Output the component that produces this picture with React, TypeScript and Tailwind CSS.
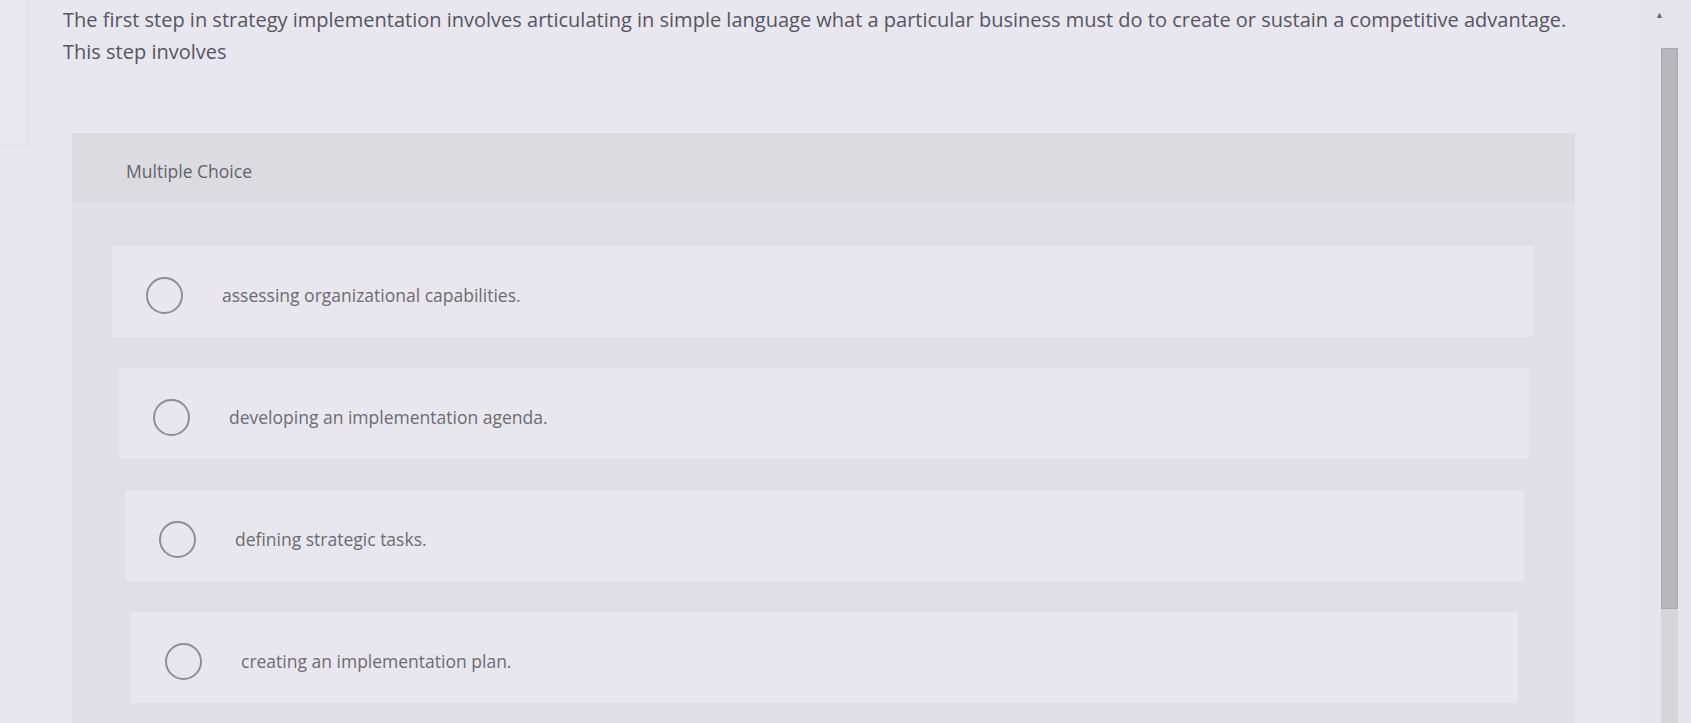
import React from "react";

const options = [
  { text: "assessing organizational capabilities.", box: "ml-[40px] mr-[42px]" },
  { text: "developing an implementation agenda.", box: "ml-[47px] mr-[46px]" },
  { text: "defining strategic tasks.", box: "ml-[53px] mr-[51px]" },
  { text: "creating an implementation plan.", box: "ml-[59px] mr-[57px]" },
];

export default function App() {
  return (
    <div
      className="w-[1691px] h-[723px] overflow-hidden bg-[#e8e6ef] flex"
      style={{ fontFamily: "'Open Sans', Lato, sans-serif" }}
    >
      <div className="relative flex-1 flex flex-col">
        <div className="absolute left-0 top-0 w-[29px] h-[146px] border-r border-b border-[#dedde4] bg-[#e9e7f0]" />
        <div className="pl-[63px] pt-[4px] text-[20px] leading-[32px] text-[#56555d]">
          <div className="whitespace-nowrap">
            The first step in strategy implementation involves articulating in simple language what a particular business must do to create or sustain a competitive advantage.
          </div>
          <div>This step involves</div>
        </div>
        <div className="mt-[65px] ml-[72px] w-[1503px] flex-1 bg-[#e0dfe5] flex flex-col">
          <div className="h-[69px] bg-[#dcdbe0] flex items-center pl-[54px] pt-[8px] text-[17.5px] text-[#64636b]">
            Multiple Choice
          </div>
          <div className="flex flex-col gap-[31px] pt-[44px]">
            {options.map((o, i) => (
              <div key={i} className={`${o.box} h-[91px] pt-[7px] bg-[#e8e7ed] flex items-center`}>
                <div className="ml-[34px] w-[37px] h-[37px] rounded-full border-2 border-[#8f8e97] shrink-0" />
                <div className="ml-[39px] text-[17.5px] text-[#6c6b73]">{o.text}</div>
              </div>
            ))}
          </div>
        </div>
      </div>
      <div className="w-[51px] flex flex-col bg-[#e6e5ec]">
        <div className="h-[48px] w-full flex items-start pt-[8px] pl-[15px] text-[9px] text-[#6a6a70]">▲</div>
        <div className="ml-[21px] w-[17px] flex-1 flex flex-col">
          <div className="h-[561px] bg-[#b8b7bc] border border-[#a9a8ae]" />
          <div className="flex-1 bg-[#d6d5da]" />
        </div>
      </div>
    </div>
  );
}
